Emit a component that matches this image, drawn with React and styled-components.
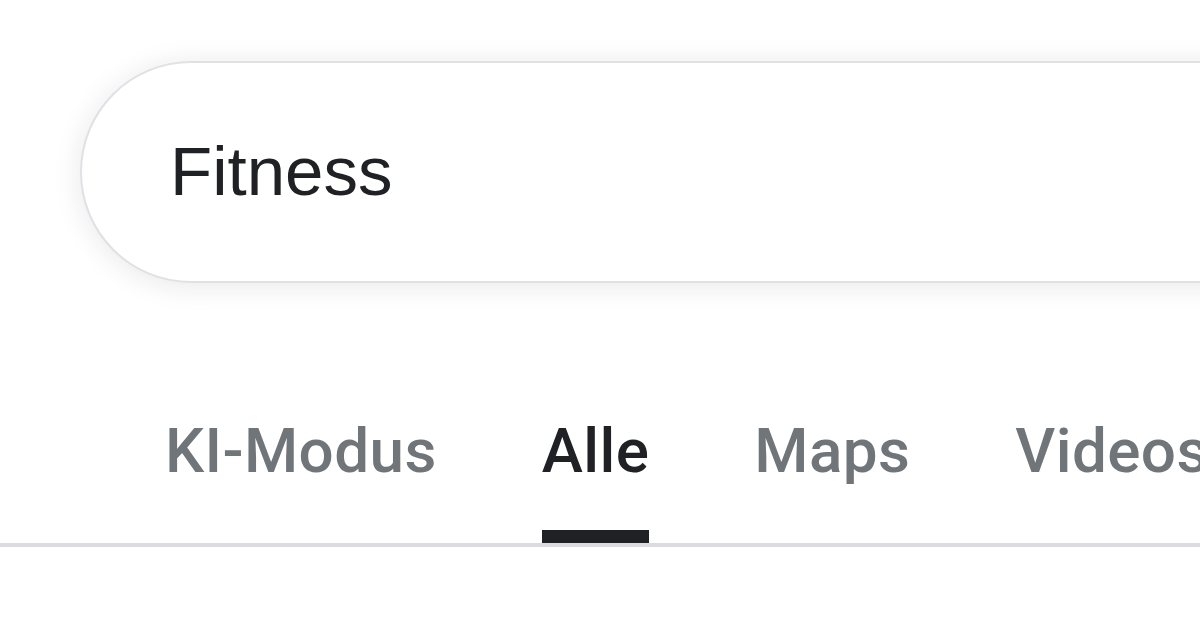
import React from "react";
import styled, { createGlobalStyle } from "styled-components";

const GlobalStyle = createGlobalStyle`
  html, body {
    margin: 0;
    padding: 0;
    background: #ffffff;
  }
  body {
    font-family: "Liberation Sans", Arial, sans-serif;
  }
`;

const tabs = [
  { label: "KI-Modus" },
  { label: "Alle", active: true },
  { label: "Maps" },
  { label: "Videos" }
];

const App = () => {
  return (
    <StyledPage>
      <GlobalStyle />
      <StyledSearchRow>
        <StyledSearchBox>
          <StyledQuery>Fitness</StyledQuery>
        </StyledSearchBox>
      </StyledSearchRow>
      <StyledTabBar>
        {tabs.map(tab => (
          <StyledTab key={tab.label}>
            <StyledTabLabel active={tab.active}>{tab.label}</StyledTabLabel>
            <StyledIndicator active={tab.active} />
          </StyledTab>
        ))}
      </StyledTabBar>
    </StyledPage>
  );
};

const StyledPage = styled.div`
  width: 1200px;
  height: 630px;
  overflow: hidden;
  background: #ffffff;
`;

const StyledSearchRow = styled.div`
  padding: 61px 0 0 80px;
`;

const StyledSearchBox = styled.div`
  display: flex;
  align-items: center;
  box-sizing: border-box;
  width: 1200px;
  height: 222px;
  padding-left: 88px;
  border: 2px solid #dfe1e5;
  border-right: none;
  border-radius: 111px 0 0 111px;
  background: #ffffff;
  box-shadow: 0 3px 28px rgba(32, 33, 36, 0.1);
`;

const StyledQuery = styled.span`
  font-size: 69px;
  line-height: 70px;
  color: #202124;
`;

const StyledTabBar = styled.nav`
  display: flex;
  gap: 105px;
  margin-top: 138px;
  padding-left: 165px;
  border-bottom: 4px solid #dadce0;
  white-space: nowrap;
`;

const StyledTab = styled.div`
  display: flex;
  flex-direction: column;
  flex-shrink: 0;
`;

const StyledTabLabel = styled.span`
  font-family: Roboto, "Liberation Sans", Arial, sans-serif;
  font-size: 62px;
  line-height: 60px;
  font-weight: 500;
  letter-spacing: 0.4px;
  color: ${props => (props.active ? "#202124" : "#70757a")};
`;

const StyledIndicator = styled.div`
  height: 13px;
  margin-top: 49px;
  background: ${props => (props.active ? "#202124" : "transparent")};
`;

export default App;
